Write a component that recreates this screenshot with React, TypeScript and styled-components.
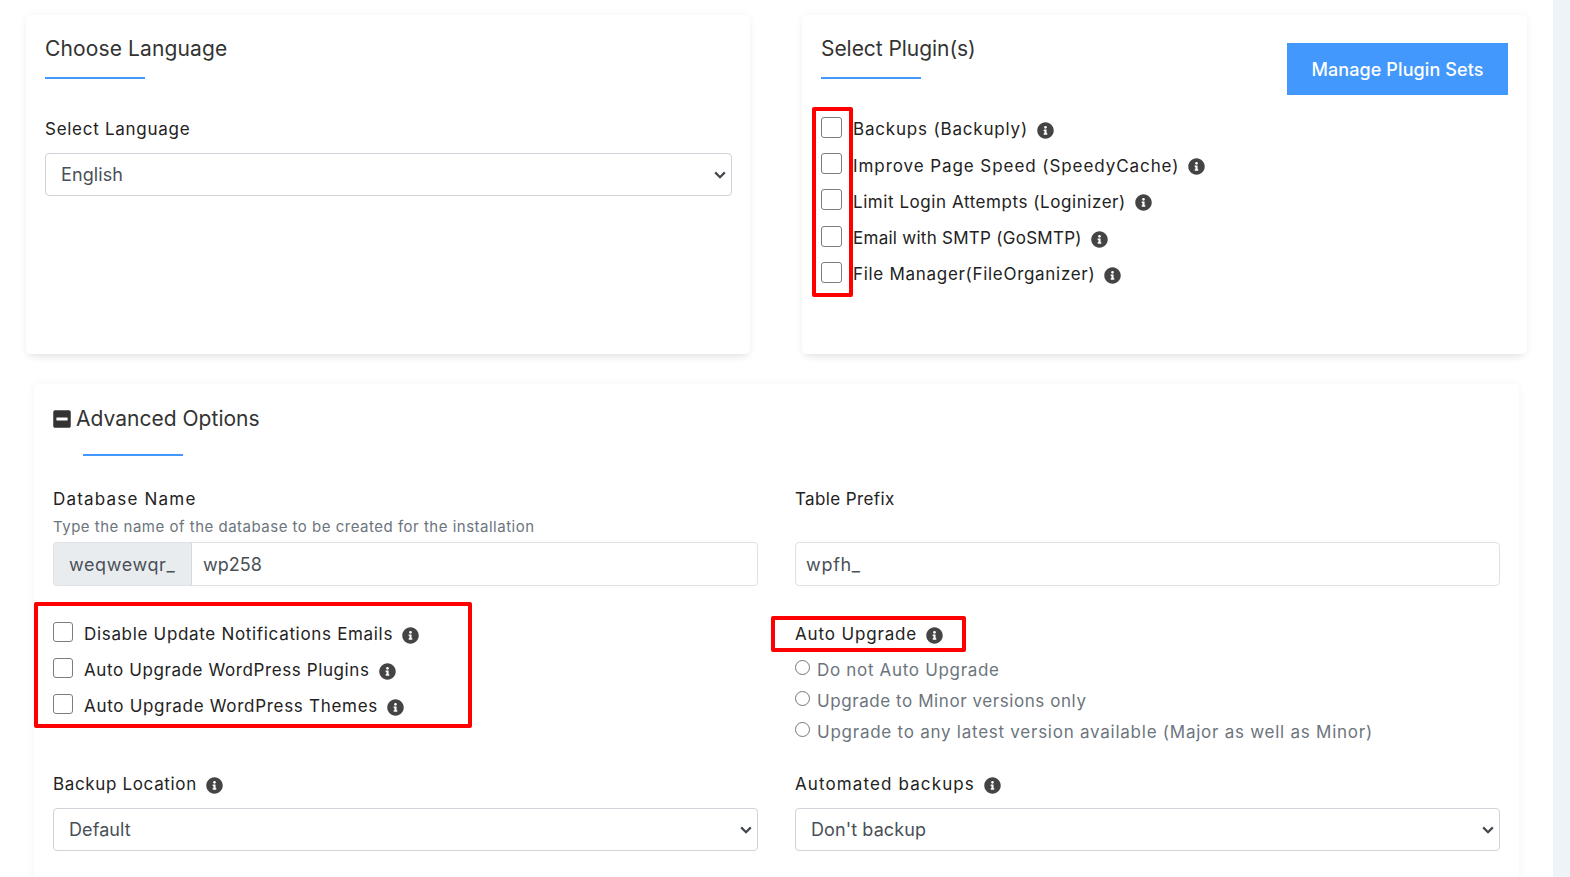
import React from 'react';
import styled, {createGlobalStyle} from 'styled-components';
import {FaInfoCircle, FaMinusSquare} from 'react-icons/fa';

const GlobalStyle = createGlobalStyle`
  html, body {
    margin: 0;
    padding: 0;
    height: 877px;
    overflow: hidden;
    background: #fff;
  }
  body, select, input {
    font-family: Inter, "Open Sans", sans-serif;
  }
`

// spacing evens out the wider letterforms of the original font, row by row
const plugins = [
    {name: 'Backups (Backuply)', spacing: 0.82},
    {name: 'Improve Page Speed (SpeedyCache)', spacing: 0.93},
    {name: 'Limit Login Attempts (Loginizer)', spacing: 0.56},
    {name: 'Email with SMTP (GoSMTP)', spacing: 0.27},
    {name: 'File Manager(FileOrganizer)', spacing: 0.7},
]

const upgradeOptions = [
    {name: 'Disable Update Notifications Emails', spacing: 0.68},
    {name: 'Auto Upgrade WordPress Plugins', spacing: 0.6},
    {name: 'Auto Upgrade WordPress Themes', spacing: 0.7},
]

const autoUpgrade = [
    {name: 'Do not Auto Upgrade', spacing: 0.68},
    {name: 'Upgrade to Minor versions only', spacing: 0.57},
    {name: 'Upgrade to any latest version available (Major as well as Minor)', spacing: 0.75},
]

const chevron = encodeURIComponent(
    '<svg xmlns="http://www.w3.org/2000/svg" width="12" height="8" viewBox="0 0 12 8"><path d="M1.2 1.4 6 6.2l4.8-4.8" fill="none" stroke="#43484e" stroke-width="2.2"/></svg>'
)

const Info = () => (
    <InfoIcon><FaInfoCircle size={17}/></InfoIcon>
)

export default function App() {
    return (
        <Page>
            <GlobalStyle/>
            <Main>
                <TopRow>
                    <Card>
                        <Title $spacing={0.13}>Choose Language</Title>
                        <Underline/>
                        <FieldLabel $top={38} $spacing={0.72}>Select Language</FieldLabel>
                        <Select defaultValue="English">
                            <option>English</option>
                        </Select>
                    </Card>
                    <Card>
                        <CardHeader>
                            <div>
                                <Title $spacing={-0.05}>Select Plugin(s)</Title>
                                <Underline/>
                            </div>
                            <Button>Manage Plugin Sets</Button>
                        </CardHeader>
                        <PluginList>
                            <Highlight $x={-9.5} $y={-4} $w={41} $h={190}/>
                            {plugins.map(({name, spacing}) => (
                                <PluginRow key={name}>
                                    <Checkbox type="checkbox" $size={21}/>
                                    <RowText $gap={11} $spacing={spacing}>{name}</RowText>
                                    <Info/>
                                </PluginRow>
                            ))}
                        </PluginList>
                    </Card>
                </TopRow>

                <AdvancedCard>
                    <AdvancedTitle>
                        <FaMinusSquare size={20}/>
                        <Title $spacing={0.02}>Advanced Options</Title>
                    </AdvancedTitle>
                    <AdvancedUnderline/>

                    <TwoCols>
                        <div>
                            <FieldLabel $spacing={1.2}>Database Name</FieldLabel>
                            <Hint>Type the name of the database to be created for the installation</Hint>
                            <InputGroup>
                                <Addon>weqwewqr_</Addon>
                                <TextInput defaultValue="wp258" $joined/>
                            </InputGroup>
                        </div>
                        <div>
                            <FieldLabel $spacing={0.38}>Table Prefix</FieldLabel>
                            <Hint/>
                            <InputGroup>
                                <TextInput defaultValue="wpfh_" $spacing={0.7}/>
                            </InputGroup>
                        </div>
                    </TwoCols>

                    <TwoCols $top={30}>
                        <OptionsBlock>
                            <Highlight $x={-19} $y={-14} $w={438} $h={126}/>
                            {upgradeOptions.map(({name, spacing}) => (
                                <OptionRow key={name}>
                                    <Checkbox type="checkbox" $size={20}/>
                                    <RowText $gap={11} $spacing={spacing}>{name}</RowText>
                                    <Info/>
                                </OptionRow>
                            ))}
                        </OptionsBlock>
                        <OptionsBlock>
                            <Highlight $x={-24} $y={0} $w={195} $h={36}/>
                            <OptionRow>
                                <RowText $gap={0} $spacing={0.85}>Auto Upgrade</RowText>
                                <Info/>
                            </OptionRow>
                            <RadioList>
                                {autoUpgrade.map(({name, spacing}) => (
                                    <RadioRow key={name}>
                                        <Radio type="radio" name="upgrade"/>
                                        <RadioText $spacing={spacing}>{name}</RadioText>
                                    </RadioRow>
                                ))}
                            </RadioList>
                        </OptionsBlock>
                    </TwoCols>

                    <TwoCols $top={13}>
                        <div>
                            <OptionRow>
                                <RowText $gap={0} $spacing={0.65}>Backup Location</RowText>
                                <Info/>
                            </OptionRow>
                            <Select $top={6} defaultValue="Default">
                                <option>Default</option>
                            </Select>
                        </div>
                        <div>
                            <OptionRow>
                                <RowText $gap={0} $spacing={1.12}>Automated backups</RowText>
                                <Info/>
                            </OptionRow>
                            <Select $top={6} defaultValue="Don't backup">
                                <option>Don't backup</option>
                            </Select>
                        </div>
                    </TwoCols>
                </AdvancedCard>
            </Main>
            <SideStrip/>
        </Page>
    );
}

const Page = styled.div`
  display: flex;
  width: 1570px;
  height: 877px;
  overflow: hidden;
`

const Main = styled.main`
  width: 1553px;
  padding-top: 15px;
  flex-shrink: 0;
`

const SideStrip = styled.div`
  flex: 1;
  background: #eef3f9;
`

const TopRow = styled.div`
  display: grid;
  grid-template-columns: 724px 724.5px;
  gap: 52px;
  padding-left: 26px;
`

const Card = styled.section`
  box-sizing: border-box;
  height: 339px;
  padding: 19px 18.5px 18px 19px;
  background: #fff;
  border-radius: 5px;
  box-shadow: 0 0 10px rgba(0, 0, 0, 0.05), 0 6px 8px -4px rgba(0, 0, 0, 0.1);
`

const AdvancedCard = styled.section`
  box-sizing: border-box;
  width: 1485px;
  margin: 30px 0 0 34px;
  padding: 20px 19px 40px;
  background: #fff;
  border-radius: 5px;
  box-shadow: 0 0 10px rgba(0, 0, 0, 0.05);
`

const Title = styled.h2<{ $spacing: number }>`
  margin: 0;
  font-size: 21px;
  font-weight: 400;
  line-height: 30px;
  letter-spacing: ${({$spacing}) => $spacing}px;
  color: #333;
`

const Underline = styled.div`
  width: 100px;
  height: 2px;
  margin-top: 13px;
  background: #4298fd;
`

const AdvancedTitle = styled.div`
  display: flex;
  align-items: center;
  gap: 4px;
  margin-left: -1px;
  color: #333;
`

const AdvancedUnderline = styled(Underline)`
  margin: 20px 0 0 30px;
`

const FieldLabel = styled.div<{ $top?: number; $spacing: number }>`
  margin-top: ${({$top}) => $top ?? 31}px;
  font-size: 17px;
  line-height: 24px;
  letter-spacing: ${({$spacing}) => $spacing}px;
  color: #222;
`

const Hint = styled.div`
  height: 21px;
  margin: 5px 0 5px;
  font-size: 15px;
  line-height: 21px;
  letter-spacing: 0.5px;
  color: #6c757d;
`

const Select = styled.select<{ $top?: number }>`
  display: block;
  box-sizing: border-box;
  appearance: none;
  width: 100%;
  height: 43px;
  margin-top: ${({$top}) => $top ?? 12}px;
  padding: 0 30px 0 15px;
  background: #fff url("data:image/svg+xml,${chevron}") no-repeat right 5px center;
  border: 1px solid #ced4da;
  border-radius: 4px;
  font-size: 18px;
  letter-spacing: 0.1px;
  color: #495057;
`

const Button = styled.button`
  height: 52px;
  width: 221px;
  margin-top: 9px;
  padding: 0;
  background: #4298fd;
  border: none;
  font-family: inherit;
  font-size: 18px;
  font-weight: 500;
  letter-spacing: 0.1px;
  color: #fff;
`

const CardHeader = styled.div`
  display: flex;
  justify-content: space-between;
  align-items: flex-start;
`

const PluginList = styled.div`
  position: relative;
  margin-top: 16.4px;
`

const Highlight = styled.div<{ $x: number; $y: number; $w: number; $h: number }>`
  position: absolute;
  left: ${({$x}) => $x}px;
  top: ${({$y}) => $y}px;
  width: ${({$w}) => $w}px;
  height: ${({$h}) => $h}px;
  box-sizing: border-box;
  border: 4px solid #f00;
  border-radius: 2px;
  pointer-events: none;
`

const PluginRow = styled.label`
  display: flex;
  align-items: center;
  height: 36.2px;
`

const OptionRow = styled.label`
  display: flex;
  align-items: center;
  height: 36px;
`

const Checkbox = styled.input<{ $size: number }>`
  appearance: none;
  box-sizing: border-box;
  width: ${({$size}) => $size}px;
  height: ${({$size}) => $size}px;
  margin: 0;
  flex-shrink: 0;
  position: relative;
  top: -2px;
  background: #fff;
  border: 1.3px solid #7d7d7d;
  border-radius: 3px;
`

const RowText = styled.span<{ $gap: number; $spacing: number }>`
  margin-left: ${({$gap}) => $gap}px;
  font-size: 17px;
  letter-spacing: ${({$spacing}) => $spacing}px;
  color: #222;
`

const InfoIcon = styled.span`
  display: inline-flex;
  position: relative;
  top: 1px;
  margin-left: 9px;
  color: #444;
`

const TwoCols = styled.div<{ $top?: number }>`
  display: grid;
  grid-template-columns: 705px 705px;
  gap: 37px;
  margin-top: ${({$top}) => $top ?? 0}px;
`

const InputGroup = styled.div`
  display: flex;
  height: 44px;
`

const Addon = styled.div`
  display: flex;
  align-items: center;
  box-sizing: border-box;
  width: 139px;
  padding-left: 15px;
  background: #e9ecef;
  border: 1px solid #dee2e6;
  border-right: 1px solid #d5d9de;
  border-radius: 4px 0 0 4px;
  font-size: 18px;
  letter-spacing: 0.6px;
  color: #495057;
`

const TextInput = styled.input<{ $joined?: boolean; $spacing?: number }>`
  flex: 1;
  min-width: 0;
  box-sizing: border-box;
  padding: 0 10px 0 ${({$joined}) => ($joined ? 11 : 10)}px;
  border: 1px solid #dee2e6;
  border-left-width: ${({$joined}) => ($joined ? 0 : 1)}px;
  border-radius: ${({$joined}) => ($joined ? '0 4px 4px 0' : '4px')};
  font-size: 18px;
  letter-spacing: ${({$spacing}) => $spacing ?? 0}px;
  color: #495057;
`

const OptionsBlock = styled.div`
  position: relative;
`

const RadioList = styled.div`
  padding-top: 8px;
`

const RadioRow = styled.label`
  display: flex;
  align-items: flex-start;
  height: 31px;
`

const Radio = styled.input`
  width: 15px;
  height: 15px;
  margin: 0 7px 0 0;
  flex-shrink: 0;
`

const RadioText = styled.span<{ $spacing: number }>`
  font-size: 17px;
  line-height: 20px;
  letter-spacing: ${({$spacing}) => $spacing}px;
  color: #6c757d;
`
